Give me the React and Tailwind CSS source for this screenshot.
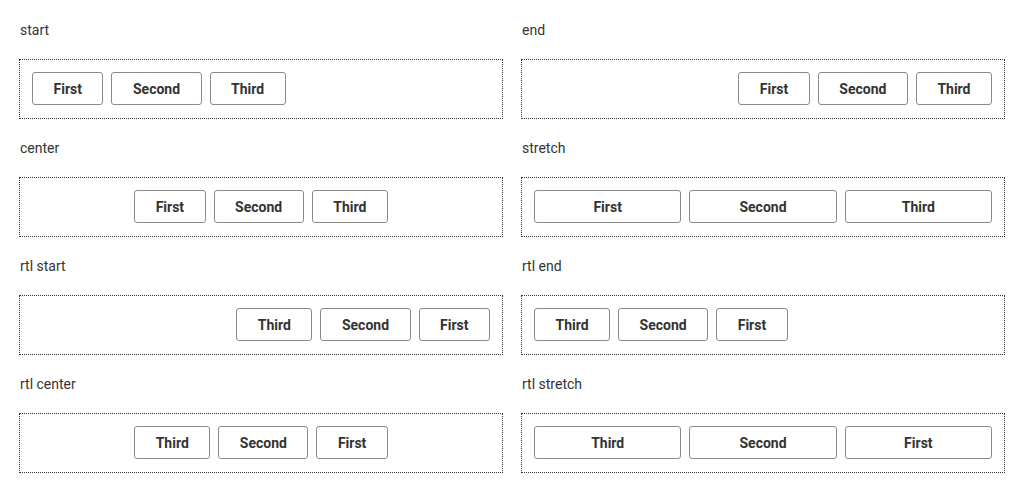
const sections = [
  { label: 'start', justify: 'justify-start', dir: 'ltr', stretch: false },
  { label: 'end', justify: 'justify-end', dir: 'ltr', stretch: false },
  { label: 'center', justify: 'justify-center', dir: 'ltr', stretch: false },
  { label: 'stretch', justify: 'justify-start', dir: 'ltr', stretch: true },
  { label: 'rtl start', justify: 'justify-start', dir: 'rtl', stretch: false },
  { label: 'rtl end', justify: 'justify-end', dir: 'rtl', stretch: false },
  { label: 'rtl center', justify: 'justify-center', dir: 'rtl', stretch: false },
  { label: 'rtl stretch', justify: 'justify-start', dir: 'rtl', stretch: true },
]

const buttons = ['First', 'Second', 'Third']

function Section({ s }) {
  return (
    <div>
      <div className="h-5 leading-5 text-sm text-[#333] pl-px">{s.label}</div>
      <div
        dir={s.dir}
        className={`mt-[19px] h-[60px] border border-dotted border-[#333] p-3 flex gap-2 ${s.justify}`}
      >
        {buttons.map((b) => (
          <button
            key={b}
            className={`h-[33px] px-[20.5px] pt-px border border-[#8a8a8a] rounded-[3px] bg-white text-sm font-bold text-[#333] ${s.stretch ? 'flex-1' : ''}`}
          >
            {b}
          </button>
        ))}
      </div>
    </div>
  )
}

export default function App() {
  return (
    <div className="bg-white w-[1024px] h-[492px] px-[19px] pt-5 font-['Roboto',sans-serif]">
      <div className="grid grid-cols-2 gap-x-[18px] gap-y-[19px]">
        {sections.map((s) => (
          <Section key={s.label} s={s} />
        ))}
      </div>
    </div>
  )
}
